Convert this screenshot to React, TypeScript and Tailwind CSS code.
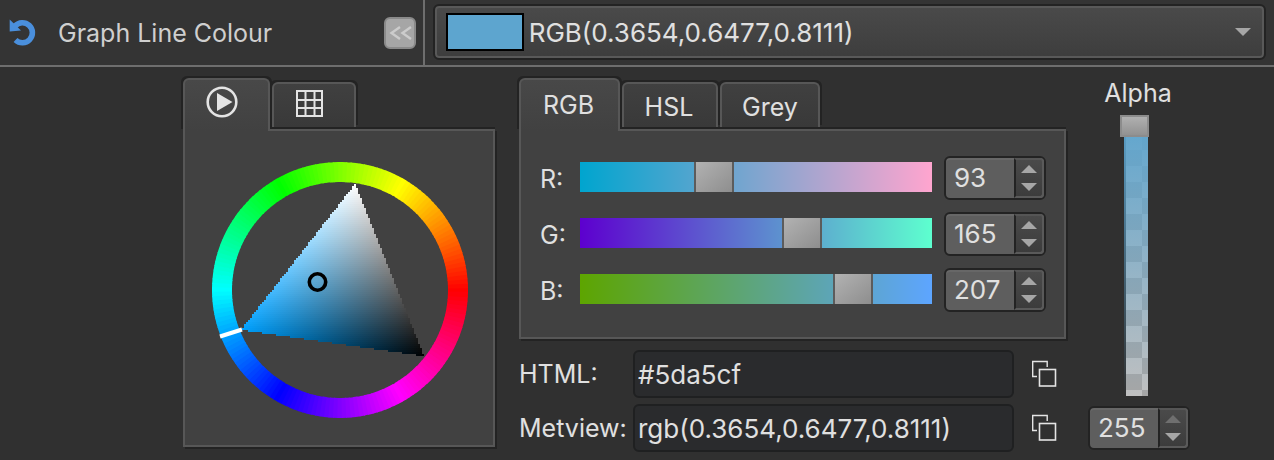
import { useId, useState } from "react";

type Point = [number, number];

const HUE: Point = [29, 168];
const WHITE: Point = [143, 22];
const BLACK: Point = [212, 194];
const HUE_RGB = [0, 161, 255];

const RING_STEPS = 180;

function shade(x: number, y: number) {
  const d =
    (WHITE[1] - BLACK[1]) * (HUE[0] - BLACK[0]) +
    (BLACK[0] - WHITE[0]) * (HUE[1] - BLACK[1]);
  const h =
    ((WHITE[1] - BLACK[1]) * (x - BLACK[0]) +
      (BLACK[0] - WHITE[0]) * (y - BLACK[1])) /
    d;
  const w =
    ((BLACK[1] - HUE[1]) * (x - BLACK[0]) +
      (HUE[0] - BLACK[0]) * (y - BLACK[1])) /
    d;
  const rgb = HUE_RGB.map((c) =>
    Math.round(Math.max(0, Math.min(255, h * c + w * 255))),
  );
  return `rgb(${rgb.join(",")})`;
}

function crossing(a: Point, b: Point, y: number) {
  const t = (y - a[1]) / (b[1] - a[1]);
  return t >= 0 && t <= 1 ? a[0] + t * (b[0] - a[0]) : null;
}

function triangleRows() {
  const rows: { y: number; x1: number; x2: number }[] = [];
  for (let y = WHITE[1]; y < BLACK[1]; y += 2) {
    const xs = [
      crossing(HUE, WHITE, y + 1),
      crossing(WHITE, BLACK, y + 1),
      crossing(HUE, BLACK, y + 1),
    ].filter((x): x is number => x !== null);
    const x1 = Math.round(Math.min(...xs) / 2) * 2;
    const x2 = Math.round(Math.max(...xs) / 2) * 2;
    if (x2 > x1) rows.push({ y, x1, x2 });
  }
  return rows;
}

function ringArc(i: number) {
  const step = (2 * Math.PI) / RING_STEPS;
  const a = (i - 0.6) * step;
  const b = (i + 0.6) * step;
  const p = (t: number) =>
    `${(128 + 118 * Math.cos(t)).toFixed(2)} ${(128 - 118 * Math.sin(t)).toFixed(2)}`;
  return `M${p(a)}A118 118 0 0 0 ${p(b)}`;
}

function ColourWheel() {
  const id = useId();
  const rows = triangleRows();
  return (
    <svg viewBox="0 0 256 256" className="size-64" role="img" aria-label="Colour wheel">
      {Array.from({ length: RING_STEPS }, (_, i) => (
        <path
          key={i}
          d={ringArc(i)}
          fill="none"
          strokeWidth="20"
          stroke={`hsl(${(i * 360) / RING_STEPS} 100% 50%)`}
        />
      ))}
      <defs>
        {rows.map((r) => (
          <linearGradient key={r.y} id={`${id}${r.y}`}>
            <stop offset="0" stopColor={shade(r.x1, r.y + 1)} />
            <stop offset="1" stopColor={shade(r.x2, r.y + 1)} />
          </linearGradient>
        ))}
      </defs>
      {rows.map((r) => (
        <rect
          key={r.y}
          x={r.x1}
          y={r.y}
          width={r.x2 - r.x1}
          height="2"
          fill={`url(#${id}${r.y})`}
          shapeRendering="crispEdges"
        />
      ))}
      <path d="M8 174.5L30 167.5" stroke="#fff" strokeWidth="4" />
      <circle cx="105.5" cy="120" r="8.2" fill="none" stroke="#000" strokeWidth="3.6" />
    </svg>
  );
}

function CopyIcon() {
  return (
    <svg viewBox="0 0 26 28" className="h-7 w-[26px]" fill="none" stroke="#e4e4e4" aria-hidden="true">
      <path d="M16.2 7V1.5H1.7V16.5H6" strokeWidth="1.4" />
      <rect x="8.5" y="9.5" width="16" height="16.5" strokeWidth="1.6" />
    </svg>
  );
}

function Spin({
  label,
  value,
  onChange,
}: {
  label: string;
  value: number;
  onChange: (v: number) => void;
}) {
  const set = (v: number) => onChange(Math.max(0, Math.min(255, v || 0)));
  return (
    <div className="flex h-11 w-[102px] shrink-0 rounded-md border-2 border-[#232323] bg-[#5e5e5e] shadow-[inset_0_2px_0_#676767]">
      <input
        aria-label={label}
        inputMode="numeric"
        value={value}
        onChange={(e) => set(Number(e.target.value))}
        className="w-0 min-w-0 flex-1 bg-transparent pl-2 text-[26px] outline-none"
      />
      <div className="flex w-[30px] flex-col overflow-hidden rounded-r-sm border-2 border-l-[#232323] border-t-[#555] border-r-[#5a5a5a] border-b-[#5a5a5a] bg-linear-to-b from-[#4a4a4a] to-[#3c3c3c]">
        <button
          aria-label={`Increase ${label}`}
          onClick={() => set(value + 1)}
          className="flex flex-1 items-center justify-center"
        >
          <svg viewBox="0 0 16 8" className="h-2 w-4" fill={value < 255 ? "#a6a6a6" : "#6f6f6f"}>
            <path d="M8 0L16 8H0z" />
          </svg>
        </button>
        <button
          aria-label={`Decrease ${label}`}
          onClick={() => set(value - 1)}
          className="flex flex-1 items-center justify-center"
        >
          <svg viewBox="0 0 16 8" className="h-2 w-4" fill="#a6a6a6">
            <path d="M0 0H16L8 8z" />
          </svg>
        </button>
      </div>
    </div>
  );
}

function Channel({
  name,
  value,
  track,
  onChange,
}: {
  name: string;
  value: number;
  track: string;
  onChange: (v: number) => void;
}) {
  const id = useId();
  return (
    <div className="flex items-center">
      <label htmlFor={id} className="w-10 shrink-0 pt-0.5">
        {name}:
      </label>
      <input
        id={id}
        type="range"
        min={0}
        max={255}
        value={value}
        onChange={(e) => onChange(Number(e.target.value))}
        className={`mr-3 mb-0.5 h-[30px] w-0 min-w-0 flex-1 appearance-none bg-linear-to-r/srgb ${track} [&::-webkit-slider-thumb]:h-[30px] [&::-webkit-slider-thumb]:w-10 [&::-webkit-slider-thumb]:appearance-none [&::-webkit-slider-thumb]:border-x-2 [&::-webkit-slider-thumb]:border-[#5c5c5c] [&::-webkit-slider-thumb]:bg-linear-to-br [&::-webkit-slider-thumb]:from-[#b2b2b2] [&::-webkit-slider-thumb]:to-[#8e8e8e]`}
      />
      <Spin label={`${name} value`} value={value} onChange={onChange} />
    </div>
  );
}

const tabBase =
  "flex justify-center rounded-t-md border-2 border-b-0 border-[#575757] shadow-[-2px_-2px_0_#232323,2px_-2px_0_#232323]";
const tabActive =
  "relative z-10 -mb-0.5 h-[53px] bg-linear-to-b from-[#484848] to-[#414141]";
const tabIdle = "mt-1 h-[45px] bg-linear-to-b from-[#404040] to-[#393939]";
const panel =
  "border-2 border-[#575757] bg-[#414141] shadow-[0_-2px_0_#232323,2px_2px_0_#232323]";

function Field({ label, value }: { label: string; value: string }) {
  const id = useId();
  return (
    <div className="flex items-center">
      <label htmlFor={id} className="w-[114px] shrink-0 whitespace-nowrap">
        {label}
      </label>
      <input
        id={id}
        readOnly
        value={value}
        className="h-12 w-0 min-w-0 flex-1 rounded-md border-2 border-[#1f2021] bg-[#2a2b2d] px-[3px] text-[26px] outline-none"
      />
      <button aria-label={`Copy ${label}`} className="mr-[9px] ml-[17px]">
        <CopyIcon />
      </button>
    </div>
  );
}

export default function App() {
  const [r, setR] = useState(93);
  const [g, setG] = useState(165);
  const [b, setB] = useState(207);
  const [alpha, setAlpha] = useState(255);

  return (
    <div className="min-h-screen bg-[#303030] font-['Inter','Liberation_Sans',sans-serif] text-[25px] leading-8 text-[#e0e0e0]">
      <header className="flex border-b-2 border-[#6e6e6e] bg-[#343434]">
        <div className="flex w-1/3 items-center border-r-2 border-[#6e6e6e] pr-[7px] pl-2">
          <button aria-label="Reset">
            <svg viewBox="0 0 28 28" className="size-7" fill="none" aria-hidden="true">
              <path d="M7 7A10 10 0 1 1 7.5 21" stroke="#4a8fdc" strokeWidth="5.6" />
              <path d="M1.7 0.5L13 11.5L1.7 12.5z" fill="#4a8fdc" />
            </svg>
          </button>
          <h1 className="ml-[22px] flex-1 whitespace-nowrap text-[#cfcfcf]">Graph Line Colour</h1>
          <button
            aria-label="Collapse"
            className="flex size-8 items-center justify-center rounded-md border-2 border-[#8a8a8a] bg-[#a6a6a6]"
          >
            <svg viewBox="0 0 24 16" className="h-4 w-6" fill="none" stroke="#cccccc" strokeWidth="2.4">
              <path d="M12 2L3.5 8L12 14M23 2L14.5 8L23 14" />
            </svg>
          </button>
        </div>
        <div className="flex-1 pt-1 pr-2 pb-[5px] pl-2">
          <button className="flex h-14 w-full items-center rounded-md border-2 border-[#232323] bg-linear-to-b from-[#4a4a4a] to-[#3d3d3d] pr-[13px] pl-[11px] shadow-[inset_0_0_0_2px_#595959]">
            <span className="h-[38px] w-[78px] border-2 border-black bg-[#5da5cf]" />
            <span className="ml-[5px] flex-1 pt-0.5 text-left text-[26px]">
              RGB(0.3654,0.6477,0.8111)
            </span>
            <svg viewBox="0 0 16 8" className="h-2 w-4" fill="#a6a6a6" aria-hidden="true">
              <path d="M0 0H16L8 8z" />
            </svg>
          </button>
        </div>
      </header>

      <main className="flex items-start pt-[11px] pr-[84px] pl-[183px]">
        <section className="w-[312px] shrink-0">
          <div className="flex items-start gap-0.5" role="tablist">
            <button role="tab" aria-selected="true" aria-label="Wheel" className={`${tabBase} ${tabActive} w-[87px] pt-[6px] pr-2.5`}>
              <svg viewBox="0 0 32 32" className="size-8" fill="#e4e4e4" aria-hidden="true">
                <circle cx="16" cy="16" r="14.3" fill="none" stroke="#e4e4e4" strokeWidth="2.6" />
                <path d="M11 7L26.5 16L11 25z" />
              </svg>
            </button>
            <button role="tab" aria-selected="false" aria-label="Palette" className={`${tabBase} ${tabIdle} w-[84px] pt-[6px] pr-2.5`}>
              <svg viewBox="0 0 27 27" className="size-[27px]" fill="none" stroke="#e4e4e4" strokeWidth="2" aria-hidden="true">
                <path d="M1 1H26V26H1zM9.5 1V26M18.5 1V26M1 10H26M1 18H26" />
              </svg>
            </button>
          </div>
          <div className={`${panel} flex justify-center pt-[31px] pb-[27px] pl-0.5`}>
            <ColourWheel />
          </div>
        </section>

        <section className="ml-6 min-w-0 flex-1">
          <div className="flex items-start gap-0.5" role="tablist">
            <button role="tab" aria-selected="true" className={`${tabBase} ${tabActive} w-[101px] pt-[9px] pr-0.5`}>
              RGB
            </button>
            <button role="tab" aria-selected="false" className={`${tabBase} ${tabIdle} w-24 pt-[7px] pr-0.5`}>
              HSL
            </button>
            <button role="tab" aria-selected="false" className={`${tabBase} ${tabIdle} w-[100px] pt-[7px]`}>
              Grey
            </button>
          </div>
          <div className={`${panel} space-y-3 pt-[25px] pr-[18px] pb-[25px] pl-[19px]`}>
            <Channel name="R" value={r} onChange={setR} track="from-[#00a5cf] to-[#ffa5cf]" />
            <Channel name="G" value={g} onChange={setG} track="from-[#5d00cf] to-[#5dffcf]" />
            <Channel name="B" value={b} onChange={setB} track="from-[#5da500] to-[#5da5ff]" />
          </div>
          <div className="mt-[11px] space-y-1.5">
            <Field label="HTML:" value="#5da5cf" />
            <Field label="Metview:" value="rgb(0.3654,0.6477,0.8111)" />
          </div>
        </section>

        <section className="ml-[22px] flex w-[102px] shrink-0 flex-col items-center">
          <label htmlFor="alpha" className="pr-0.5 leading-[30px]">
            Alpha
          </label>
          <div className="mt-[7px] mr-2.5 mb-[10px] grid h-[281px] w-[29px]">
            <div className="col-start-1 row-start-1 ml-1 w-6 bg-linear-to-b/srgb from-[#5da5cf] to-transparent">
              <div className="ml-0.5 h-full bg-[linear-gradient(to_bottom,#5da5cf,transparent),repeating-conic-gradient(#c0c0c0_0_25%,#a6a6a6_0_50%)] bg-size-[100%_100%,32px_32px] bg-position-[0_0,0_3px]" />
            </div>
            <input
              id="alpha"
              type="range"
              min={0}
              max={255}
              value={alpha}
              onChange={(e) => setAlpha(Number(e.target.value))}
              className="col-start-1 row-start-1 h-full w-[29px] appearance-none bg-transparent [direction:rtl] [writing-mode:vertical-lr] [&::-webkit-slider-thumb]:h-[22px] [&::-webkit-slider-thumb]:w-[29px] [&::-webkit-slider-thumb]:appearance-none [&::-webkit-slider-thumb]:border-2 [&::-webkit-slider-thumb]:border-[#8c8c8c] [&::-webkit-slider-thumb]:bg-linear-to-b [&::-webkit-slider-thumb]:from-[#b0b0b0] [&::-webkit-slider-thumb]:to-[#929292]"
            />
          </div>
          <Spin label="Alpha value" value={alpha} onChange={setAlpha} />
        </section>
      </main>
    </div>
  );
}
